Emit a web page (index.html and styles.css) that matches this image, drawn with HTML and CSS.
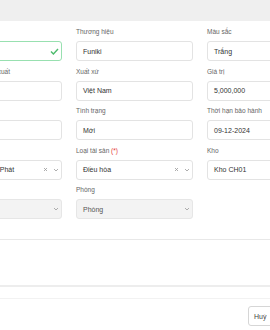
FILE: index.html
```html
<!DOCTYPE html>
<html lang="vi">
<head>
  <meta charset="UTF-8">
  <meta name="viewport" content="width=device-width, initial-scale=1.0">
  <title>Tài sản</title>
  <link rel="stylesheet" href="styles.css">
</head>
<body>
  <div class="modal">
    <div class="modal-top"></div>

    <div class="modal-body">
      <div class="form-grid">
        <div class="field">
          <label>Tên</label>
          <div class="input valid">
            <span>Điều</span>
            <svg class="check" width="9" height="7" viewBox="0 0 9 7"><polyline points="1,3.6 3.4,6 8,1" fill="none" stroke="#4cbb6c" stroke-width="1.4"/></svg>
          </div>
        </div>
        <div class="field">
          <label>Thương hiệu</label>
          <div class="input">Funiki</div>
        </div>
        <div class="field">
          <label>Màu sắc</label>
          <div class="input">Trắng</div>
        </div>

        <div class="field">
          <label>Ngày bắt đầu sản xuất</label>
          <div class="input"></div>
        </div>
        <div class="field">
          <label>Xuất xứ</label>
          <div class="input">Việt Nam</div>
        </div>
        <div class="field">
          <label>Giá trị</label>
          <div class="input">5,000,000</div>
        </div>

        <div class="field">
          <label>Model</label>
          <div class="input"></div>
        </div>
        <div class="field">
          <label>Tình trạng</label>
          <div class="input">Mới</div>
        </div>
        <div class="field">
          <label>Thời hạn bảo hành</label>
          <div class="input">09-12-2024</div>
        </div>

        <div class="field">
          <label>Người</label>
          <div class="input select">
            <span>Nguyễn Thành Phát</span>
            <svg class="clear" width="5" height="5" viewBox="0 0 5 5"><path d="M1 1L4 4M4 1L1 4" stroke="#999" stroke-width="0.8"/></svg>
            <svg class="arrow" width="6" height="4" viewBox="0 0 6 4"><polyline points="1,1 3,3 5,1" fill="none" stroke="#999" stroke-width="0.8"/></svg>
          </div>
        </div>
        <div class="field">
          <label>Loại tài sản <em>(*)</em></label>
          <div class="input select">
            <span>Điều hòa</span>
            <svg class="clear" width="5" height="5" viewBox="0 0 5 5"><path d="M1 1L4 4M4 1L1 4" stroke="#999" stroke-width="0.8"/></svg>
            <svg class="arrow" width="6" height="4" viewBox="0 0 6 4"><polyline points="1,1 3,3 5,1" fill="none" stroke="#999" stroke-width="0.8"/></svg>
          </div>
        </div>
        <div class="field">
          <label>Kho</label>
          <div class="input">Kho CH01</div>
        </div>

        <div class="field">
          <label>Bộ</label>
          <div class="input select disabled">
            <svg class="arrow" width="6" height="4" viewBox="0 0 6 4"><polyline points="1,1 3,3 5,1" fill="none" stroke="#999" stroke-width="0.8"/></svg>
          </div>
        </div>
        <div class="field">
          <label>Phòng</label>
          <div class="input select disabled">
            <span class="placeholder">Phòng</span>
            <svg class="arrow" width="6" height="4" viewBox="0 0 6 4"><polyline points="1,1 3,3 5,1" fill="none" stroke="#999" stroke-width="0.8"/></svg>
          </div>
        </div>
        <div class="field"></div>
      </div>

      <div class="note-box"></div>
    </div>

    <div class="modal-footer">
      <button class="btn">Huỷ</button>
      <button class="btn primary">Lưu</button>
    </div>
  </div>
</body>
</html>
```

FILE: styles.css
```css
html, body {
  margin: 0;
  padding: 0;
  overflow: hidden;
  background: #fff;
}
body {
  font-family: 'Liberation Sans', Arial, sans-serif;
  color: #333;
}
.modal {
  width: 400px;
  margin-left: -55px;
}
.modal-top {
  height: 21px;
  background: #efefef;
}
.modal-body {
  padding-top: 6px;
}
.form-grid {
  display: grid;
  grid-template-columns: 117px 117px 117px;
  column-gap: 14px;
  row-gap: 5.5px;
}
.field {
  display: flex;
  flex-direction: column;
  align-items: flex-start;
}
.field label {
  font-size: 6.5px;
  line-height: 10px;
  height: 10px;
  margin-bottom: 4px;
  color: #666;
  white-space: nowrap;
}
.field label em {
  font-style: normal;
  color: #e53935;
}
.input {
  box-sizing: border-box;
  align-self: stretch;
  height: 20px;
  border: 1px solid #e3e3e3;
  border-radius: 3px;
  padding: 0 6px;
  display: flex;
  align-items: center;
  font-size: 7px;
  color: #333;
  background: #fff;
  white-space: nowrap;
  overflow: hidden;
}
.input.valid {
  border-color: #98e0b0;
  padding-right: 2px;
}
.check {
  flex: none;
  margin-left: auto;
}
.select {
  padding-right: 2px;
}
.select .clear {
  flex: none;
  margin-left: auto;
  margin-right: 5px;
}
.select .arrow {
  flex: none;
  margin-left: auto;
}
.select .clear + .arrow {
  margin-left: 0;
}
.input.disabled {
  background: #f3f3f3;
  border-color: #e6e6e6;
}
.placeholder {
  color: #555;
}
.note-box {
  margin-top: 20px;
  height: 45px;
  border-top: 1px solid #e8e8e8;
  border-bottom: 2px solid #ededed;
}
.modal-footer {
  margin-top: 11px;
  border-top: 1px solid #f2f2f2;
  padding: 7px 14px 0 0;
  display: flex;
  justify-content: flex-end;
  gap: 6px;
}
.btn {
  box-sizing: border-box;
  height: 20px;
  width: 34px;
  border: 1px solid #d6d6d6;
  border-radius: 3px;
  background: #fff;
  font-family: inherit;
  font-size: 7px;
  color: #444;
  padding: 0 0 0 5px;
  text-align: left;
}
.btn.primary {
  width: 43px;
  background: #1e88e5;
  border-color: #1e88e5;
  color: #fff;
}
```
